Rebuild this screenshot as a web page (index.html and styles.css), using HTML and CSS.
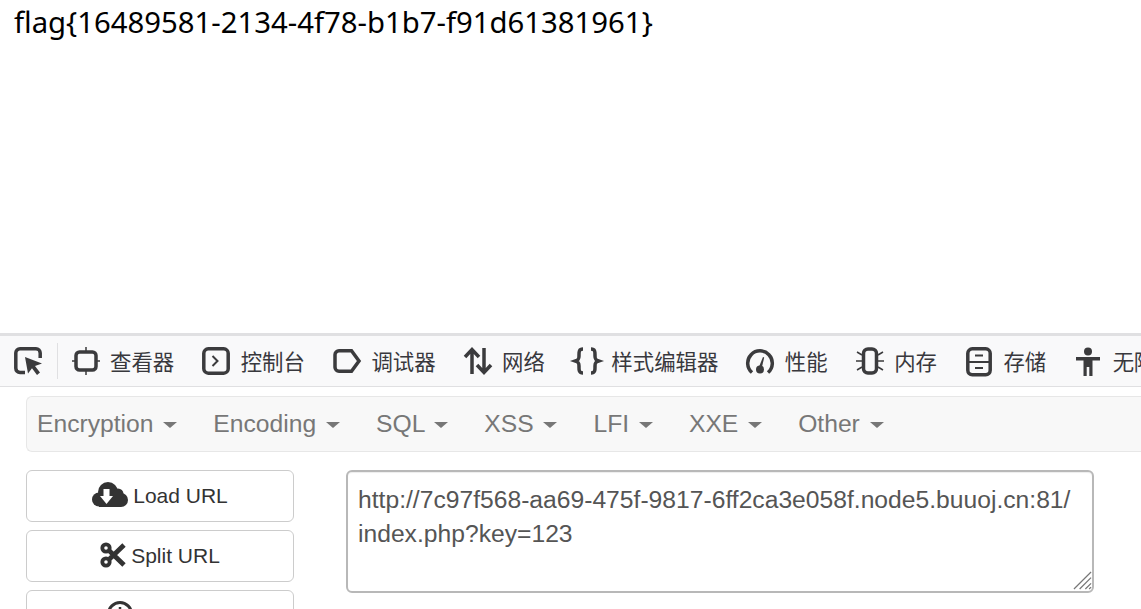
FILE: index.html

```html
<!DOCTYPE html>
<html lang="zh">
<head>
  <meta charset="UTF-8">
  <title>flag</title>
  <link rel="stylesheet" href="styles.css">
</head>
<body>
  <div class="page">flag{16489581-2134-4f78-b1b7-f91d61381961}</div>

  <div class="devtools">
    <div class="toolbar">
      <div class="picker">
        <svg class="icon" viewBox="0 0 28 28"><path d="M11 25.500H6A4.200 4.200 0 0 1 1.800 21.300V6A4.200 4.200 0 0 1 6 1.800h16A4.200 4.200 0 0 1 26.200 6v5" fill="none" stroke="#3b3b3d" stroke-width="3.500"/><path d="M11 10l17 6.500-7 2.500 5 6.500-3 2.500-5-6.800-4 5.300z" fill="#3b3b3d"/></svg>
      </div>
      <div class="tab">
        <svg class="icon" viewBox="0 0 28 28"><rect x="4" y="5" width="20" height="18" rx="3.500" fill="none" stroke="#3b3b3d" stroke-width="3.500"/><path d="M14 0v5M14 23v5M0 14h4M24 14h4" stroke="#3b3b3d" stroke-width="1.500"/></svg>
        <span>查看器</span>
      </div>
      <div class="tab">
        <svg class="icon" viewBox="0 0 28 28"><rect x="1.800" y="1.800" width="24.400" height="24.400" rx="4.500" fill="none" stroke="#3b3b3d" stroke-width="3.500"/><path d="M10.500 9l5 5-5 5" fill="none" stroke="#3b3b3d" stroke-width="2"/></svg>
        <span>控制台</span>
      </div>
      <div class="tab">
        <svg class="icon" viewBox="0 0 28 28"><path d="M6 3.800h12.500L26 14l-7.500 10.200H6A4 4 0 0 1 2 20.200V7.800A4 4 0 0 1 6 3.800z" fill="none" stroke="#3b3b3d" stroke-width="3.500"/></svg>
        <span>调试器</span>
      </div>
      <div class="tab">
        <svg class="icon" viewBox="0 0 28 28"><path d="M8 27V3M1 10l7-7.500L15 10M20 1v24M13 18l7 7.500 7-7.500" fill="none" stroke="#3b3b3d" stroke-width="3.500"/></svg>
        <span>网络</span>
      </div>
      <div class="tab">
        <svg class="icon" viewBox="0 0 28 28"><path d="M10 2C5.500 2 6 5.500 6 9c0 3-.5 4-3.500 5 3 1 3.500 2 3.500 5 0 3.500-.5 7 4 7M18 2c4.500 0 4 3.500 4 7 0 3 .5 4 3.500 5-3 1-3.500 2-3.500 5 0 3.500.5 7-4 7" fill="none" stroke="#3b3b3d" stroke-width="3.500"/></svg>
        <span>样式编辑器</span>
      </div>
      <div class="tab">
        <svg class="icon" viewBox="0 0 28 28"><path d="M6 25.500A12.300 12.300 0 1 1 22 25.500" fill="none" stroke="#3b3b3d" stroke-width="3.500"/><path d="M12.500 21l4.500-11 1.200.4-2.700 11.600z" fill="#3b3b3d"/><circle cx="14" cy="22.500" r="4" fill="#3b3b3d"/></svg>
        <span>性能</span>
      </div>
      <div class="tab">
        <svg class="icon" viewBox="0 0 28 28"><rect x="7.500" y="2" width="13" height="24" rx="4.500" fill="none" stroke="#3b3b3d" stroke-width="3.500"/><path d="M6 8L1 5M6 14H0M6 20l-5 3M22 8l5-3M22 14h6M22 20l5 3" stroke="#3b3b3d" stroke-width="1.500"/></svg>
        <span>内存</span>
      </div>
      <div class="tab">
        <svg class="icon" viewBox="0 0 28 28"><rect x="2.800" y="1.800" width="22.400" height="26" rx="4.500" fill="none" stroke="#3b3b3d" stroke-width="3.500"/><path d="M3 15h22M10 8.500h8M10 21h8" stroke="#3b3b3d" stroke-width="2"/></svg>
        <span>存储</span>
      </div>
      <div class="tab">
        <svg class="icon" viewBox="0 0 28 28"><circle cx="14" cy="4.500" r="4" fill="#3b3b3d"/><path d="M2 10h24v3.500h-7.500V29h-3.200v-9h-2.600v9H9.500V13.500H2z" fill="#3b3b3d"/></svg>
        <span>无障碍环境</span>
      </div>
    </div>

    <div class="panel">
      <nav class="navbar">
        <span class="menu">Encryption <i class="caret"></i></span>
        <span class="menu">Encoding <i class="caret"></i></span>
        <span class="menu">SQL <i class="caret"></i></span>
        <span class="menu">XSS <i class="caret"></i></span>
        <span class="menu">LFI <i class="caret"></i></span>
        <span class="menu">XXE <i class="caret"></i></span>
        <span class="menu">Other <i class="caret"></i></span>
      </nav>

      <div class="workspace">
        <div class="actions">
          <button class="btn">
            <svg class="btn-icon cloud" viewBox="0 0 36 25"><g fill="#333"><circle cx="16" cy="10" r="10"/><circle cx="7" cy="17.500" r="7"/><circle cx="29" cy="18" r="7"/><circle cx="26" cy="12" r="5.500"/><rect x="7" y="12" width="22" height="13"/></g><path d="M11.500 7h6v7h3.500l-6.500 8L8 14h3.500z" fill="#fff"/></svg>
            Load URL
          </button>
          <button class="btn">
            <svg class="btn-icon scissors" viewBox="0 0 26 26"><circle cx="6" cy="6" r="3.700" fill="none" stroke="#333" stroke-width="3.800"/><circle cx="6" cy="20" r="3.700" fill="none" stroke="#333" stroke-width="3.800"/><path d="M9 8.500L24 23M9 17.500L24 3" stroke="#333" stroke-width="4.800"/></svg>
            Split URL
          </button>
          <button class="btn">
            <svg class="btn-icon clock" viewBox="0 0 26 26"><circle cx="13" cy="13" r="11.500" fill="none" stroke="#333" stroke-width="3"/><path d="M13 6v8h6" fill="none" stroke="#333" stroke-width="2.500"/></svg>
            Execute
          </button>
        </div>
        <div class="url-wrap">
          <textarea class="url-box" spellcheck="false">http://7c97f568-aa69-475f-9817-6ff2ca3e058f.node5.buuoj.cn:81/
index.php?key=123</textarea>
          <svg class="grip" viewBox="0 0 20 20"><path d="M1 19L19 1M7 19L19 7M13 19l6-6M17 19l2-2" stroke="#777" stroke-width="1.300"/></svg>
        </div>
      </div>
    </div>
  </div>
</body>
</html>
```

FILE: styles.css

```css
html, body { margin: 0; height: 609px; overflow: hidden; background-color: #fff; }
body { font-family: "Liberation Sans", Arial, sans-serif; }

.page { height: 333px; box-sizing: border-box; padding: 3px 14px 0; font-family: "Noto Sans", "Open Sans", sans-serif; font-size: 29.3px; line-height: 38px; color: #000; white-space: nowrap; }

.devtools { border-top: 3px solid #e0e0e2; }
.toolbar { display: flex; align-items: center; height: 50px; padding-left: 14px; background-color: #f9f9fa; border-bottom: 1px solid #e0e0e2; white-space: nowrap; overflow: hidden; font-family: "Noto Sans CJK SC", sans-serif; font-size: 21.4px; line-height: 48px; color: #38383d; }
.icon { width: 28px; height: 28px; flex: none; overflow: visible; }
.picker { display: flex; align-items: center; height: 36px; padding-right: 14.500px; border-right: 1px solid #e0e0e2; }
.tab { display: flex; align-items: center; gap: 10.500px; margin: 0 14px; flex: none; }

.panel { padding: 9px 0 0 26px; }
.navbar { display: flex; align-items: center; height: 54px; padding-left: 10px; gap: 36px; background-color: #f8f8f8; border: 1px solid #e7e7e7; border-right: none; border-radius: 6px 0 0 6px; font-size: 24.67px; color: #777; }
.menu { white-space: nowrap; }
.caret { display: inline-block; margin-left: 3px; vertical-align: middle; border-top: 6px solid #777; border-left: 7px solid transparent; border-right: 7px solid transparent; }

.workspace { display: flex; align-items: flex-start; gap: 52px; margin-top: 18px; }
.actions { display: flex; flex-direction: column; gap: 8.500px; width: 268px; flex: none; }
.btn { display: flex; align-items: center; justify-content: center; gap: 5px; height: 51.500px; padding: 0; background-color: #fff; border: 1px solid #ccc; border-radius: 6px; font-family: "Liberation Sans", Arial, sans-serif; font-size: 21px; color: #333; }
.btn-icon { flex: none; }
.cloud { width: 36px; height: 25px; margin-bottom: 2px; }
.scissors { width: 26px; height: 26px; margin-bottom: 2px; }
.clock { width: 26px; height: 26px; margin-bottom: 4px; }

.url-wrap { position: relative; width: 748px; height: 123px; }
.url-box { display: block; width: 100%; height: 100%; box-sizing: border-box; padding: 11px 10px; border: 2px solid #b8b8b8; border-radius: 6px; box-shadow: inset 0 1px 1px rgba(0, 0, 0, 0.075); font-family: "Liberation Sans", Arial, sans-serif; font-size: 24.67px; line-height: 34px; color: #555; white-space: pre; resize: none; outline: none; overflow: hidden; }
.grip { position: absolute; right: 2px; bottom: 3px; width: 19px; height: 19px; }
```
